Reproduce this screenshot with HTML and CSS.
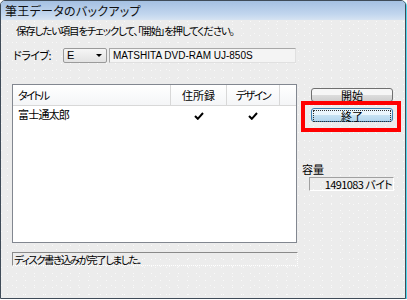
FILE: index.html
```html
<!DOCTYPE html>
<html lang="ja">
<head>
    <meta charset="UTF-8">
    <title>筆王データのバックアップ</title>
    <link rel="stylesheet" href="styles.css">
</head>
<body>
    <div class="window">
        <div class="titlebar">筆王データのバックアップ</div>
        <div class="client">
            <p class="intro">保存したい項目をチェックして、「開始」を押してください。</p>
            <div class="drive-row">
                <span class="drive-label">ドライブ:</span>
                <div class="combo">
                    <span>E</span>
                    <span class="combo-arrow"></span>
                </div>
                <div class="drive-name">MATSHITA DVD-RAM UJ-850S</div>
            </div>
            <div class="main">
                <div class="left-col">
                    <div class="listbox">
                        <div class="list-head">
                            <div class="col col-title">タイトル</div>
                            <div class="col col-check">住所録</div>
                            <div class="col col-check2">デザイン</div>
                            <div class="col col-rest"></div>
                        </div>
                        <div class="list-row">
                            <div class="col col-title">富士通太郎</div>
                            <div class="col col-check">
                                <svg width="10" height="8" viewBox="0 0 10 8"><path d="M1 4 L3.8 6.8 L9 1" fill="none" stroke="#000" stroke-width="2"/></svg>
                            </div>
                            <div class="col col-check2">
                                <svg width="10" height="8" viewBox="0 0 10 8"><path d="M1 4 L3.8 6.8 L9 1" fill="none" stroke="#000" stroke-width="2"/></svg>
                            </div>
                        </div>
                    </div>
                    <div class="status">ディスク書き込みが完了しました..</div>
                </div>
                <div class="side-col">
                    <button class="btn">開始</button>
                    <button class="btn btn-default"><span class="focus-ring">終了</span></button>
                    <div class="cap-label">容量</div>
                    <div class="cap-field">1491083 バイト</div>
                </div>
            </div>
        </div>
        <div class="highlight"></div>
    </div>
</body>
</html>
```

FILE: styles.css
```css
body {
    margin: 0;
    background: #fff;
    font-family: "Noto Sans CJK JP", "Liberation Sans", sans-serif;
    font-feature-settings: "palt";
    font-size: 11px;
    color: #000;
}
.window {
    position: relative;
    width: 404px;
    height: 297px;
    border: 1px solid #3f4b58;
    border-radius: 5px 5px 0 0;
    box-shadow: 1px 1px 0 #4fd8ec;
    background-color: #ececec;
    background-image:
        radial-gradient(circle, #fafafa 0.7px, transparent 0.9px),
        radial-gradient(circle, #f8f8f8 0.7px, transparent 0.9px);
    background-size: 9px 7px, 11px 9px;
    background-position: 2px 3px, 6px 1px;
    overflow: hidden;
}
.titlebar {
    height: 19px;
    padding-left: 4px;
    line-height: 19px;
    font-size: 12px;
    letter-spacing: 0.3px;
    color: #111;
    background: linear-gradient(#a4c0e2, #c2d6ee 70%, #d6e3f2);
}
.client {
    padding-left: 11px;
}
.intro {
    margin: 0;
    padding: 5px 0 0 4px;
    line-height: 12px;
    font-size: 10.5px;
    letter-spacing: -1.2px;
}
.drive-row {
    display: flex;
    align-items: center;
    height: 14px;
    margin-top: 11px;
}
.drive-label {
    width: 50px;
    padding-left: 1px;
    letter-spacing: -0.5px;
}
.combo {
    display: flex;
    align-items: center;
    justify-content: space-between;
    box-sizing: border-box;
    width: 44px;
    height: 15px;
    padding: 0 4px 0 3px;
    border: 1px solid #9a9a9a;
    border-radius: 2px;
    background: linear-gradient(#f6f6f6, #e2e2e2);
    font-family: "Liberation Sans", sans-serif;
    font-size: 11px;
}
.combo-arrow {
    width: 0;
    height: 0;
    border-left: 3px solid transparent;
    border-right: 3px solid transparent;
    border-top: 3px solid #000;
}
.drive-name {
    box-sizing: border-box;
    width: 187px;
    height: 15px;
    margin-left: 2px;
    padding-left: 3px;
    line-height: 13px;
    border: 1px solid #a8a8a8;
    border-right-color: #e0e0e0;
    border-bottom-color: #e0e0e0;
    background: #f4f4f4;
    font-family: "Liberation Sans", sans-serif;
    font-size: 10px;
}
.main {
    display: flex;
    margin-top: 22px;
}
.left-col {
    width: 286px;
}
.listbox {
    box-sizing: border-box;
    width: 285px;
    height: 159px;
    border: 1px solid #828790;
    background: #fff;
}
.list-head {
    display: flex;
    height: 20px;
    border-bottom: 1px solid #d8d8d8;
    background: linear-gradient(#fff, #f4f5f7);
}
.list-head .col {
    line-height: 20px;
    border-right: 1px solid #d8d8d8;
}
.list-head .col-title {
    letter-spacing: -2px;
}
.list-head .col-check2 {
    letter-spacing: -1.5px;
}
.list-head .col-rest {
    border-right: none;
}
.list-row {
    display: flex;
    height: 16px;
}
.list-row .col {
    line-height: 16px;
    border-right: 1px solid transparent;
}
.list-row .col-title {
    letter-spacing: -0.8px;
}
.col-title {
    box-sizing: border-box;
    width: 158px;
    padding-left: 5px;
}
.col-check {
    width: 55px;
    text-align: center;
}
.col-check2 {
    width: 52px;
    text-align: center;
}
.col-check svg, .col-check2 svg {
    vertical-align: -1px;
}
.status {
    box-sizing: border-box;
    width: 286px;
    height: 14px;
    margin-top: 9px;
    padding-left: 1px;
    line-height: 13px;
    font-size: 10.5px;
    letter-spacing: -1.5px;
    border-top: 1px solid #8a8a8a;
    border-left: 1px solid #8a8a8a;
    border-right: 1px dotted #fff;
    border-bottom: 1px dotted #fff;
}
.side-col {
    display: flex;
    flex-direction: column;
    margin-left: 13px;
}
.btn {
    box-sizing: border-box;
    width: 82px;
    height: 14px;
    margin-top: 4px;
    padding: 0;
    border: 1px solid #707070;
    border-radius: 3px;
    background: linear-gradient(#f6f6f6 50%, #dddddd 50%, #cfcfcf);
    font-family: inherit;
    font-size: 11px;
    line-height: 12px;
    color: #000;
}
.btn-default {
    margin-top: 6px;
    border-color: #3c7fb1;
    background: linear-gradient(#eaf6fd 50%, #c8e2f2 50%, #b3d6ee);
    padding: 1px;
}
.focus-ring {
    display: block;
    height: 10px;
    line-height: 10px;
    border: 1px dotted #333;
}
.cap-label {
    margin-top: 42px;
    margin-left: -9px;
    line-height: 10px;
}
.cap-field {
    box-sizing: border-box;
    width: 85px;
    height: 14px;
    margin-top: 3px;
    margin-left: -2px;
    padding-right: 1px;
    line-height: 12px;
    text-align: right;
    letter-spacing: -0.6px;
    border: 1px solid #a0a0a0;
    border-right-color: #fff;
    border-bottom-color: #fff;
    font-size: 11px;
}
.highlight {
    position: absolute;
    left: 300px;
    top: 100px;
    width: 92px;
    height: 23px;
    border: 4px solid #ff0000;
}
```
